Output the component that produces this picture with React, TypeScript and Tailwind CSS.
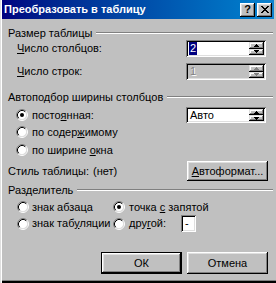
import React from "react";

function Arrow({ up, color }: { up: boolean; color: string }) {
  const rows = up
    ? [
        [2, 0, 1],
        [1, 1, 3],
        [0, 2, 5],
      ]
    : [
        [0, 0, 5],
        [1, 1, 3],
        [2, 2, 1],
      ];
  return (
    <svg width="5" height="3" viewBox="0 0 5 3" shapeRendering="crispEdges">
      {rows.map(([x, y, w], i) => (
        <rect key={i} x={x} y={y} width={w} height={1} fill={color} />
      ))}
    </svg>
  );
}

function SpinBtn({ up, disabled }: { up: boolean; disabled?: boolean }) {
  return (
    <div className="flex-1 flex items-center justify-center bg-[#c0c0c0] shadow-[inset_-1px_-1px_0_#000,inset_1px_1px_0_#dfdfdf,inset_-2px_-2px_0_#808080,inset_2px_2px_0_#fff]">
      <Arrow up={up} color={disabled ? "#808080" : "#000"} />
    </div>
  );
}

function Spin({ children, disabled, tall }: { children: React.ReactNode; disabled?: boolean; tall?: boolean }) {
  return (
    <div
      className={`flex shrink-0 w-[80px] p-[2px] shadow-[inset_1px_1px_0_#808080,inset_-1px_-1px_0_#fff,inset_2px_2px_0_#000,inset_-2px_-2px_0_#dfdfdf] ${
        tall ? "h-[17px]" : "h-[16px]"
      } ${disabled ? "bg-[#c0c0c0]" : "bg-white"}`}
    >
      <div className="flex-1 flex items-center pl-[1px]">{children}</div>
      <div className="w-[15px] flex flex-col">
        <SpinBtn up disabled={disabled} />
        <SpinBtn up={false} disabled={disabled} />
      </div>
    </div>
  );
}

function Radio({ checked }: { checked?: boolean }) {
  return (
    <svg width="12" height="12" viewBox="0 0 12 12" className="shrink-0">
      <circle cx="6" cy="6" r="4.5" fill="#fff" />
      <path d="M2.11 9.89 A5.5 5.5 0 0 1 9.89 2.11" fill="none" stroke="#808080" strokeWidth="1" />
      <path d="M9.89 2.11 A5.5 5.5 0 0 1 2.11 9.89" fill="none" stroke="#fff" strokeWidth="1" />
      <path d="M2.82 9.18 A4.5 4.5 0 0 1 9.18 2.82" fill="none" stroke="#000" strokeWidth="1" />
      <path d="M9.18 2.82 A4.5 4.5 0 0 1 2.82 9.18" fill="none" stroke="#dfdfdf" strokeWidth="1" />
      {checked && <circle cx="6" cy="6" r="2" fill="#000" />}
    </svg>
  );
}

function Heading({ children }: { children: React.ReactNode }) {
  return (
    <div className="flex items-center h-[14px]">
      <span className="whitespace-nowrap">{children}</span>
      <div className="flex-1 ml-[4px] border-t border-t-[#808080] border-b border-b-white" />
    </div>
  );
}

function Btn({ children, def, w }: { children: React.ReactNode; def?: boolean; w: string }) {
  return (
    <div className={`${w} shrink-0 h-full ${def ? "border border-black" : ""}`}>
      <div className="w-full h-full flex items-center justify-center bg-[#c0c0c0] shadow-[inset_-1px_-1px_0_#000,inset_1px_1px_0_#fff,inset_-2px_-2px_0_#808080,inset_2px_2px_0_#dfdfdf]">
        {children}
      </div>
    </div>
  );
}

function TitleBtn({ children }: { children: React.ReactNode }) {
  return (
    <div className="w-[15px] h-[14px] flex items-center justify-center bg-[#c0c0c0] shadow-[inset_-1px_-1px_0_#000,inset_1px_1px_0_#fff,inset_-2px_-2px_0_#808080,inset_2px_2px_0_#dfdfdf]">
      {children}
    </div>
  );
}

export default function App() {
  return (
    <div className="w-[276px] h-[283px] bg-[#c0c0c0] flex flex-col text-[11px] leading-[13px] text-black [font-family:'Liberation_Sans',Arial,sans-serif] shadow-[inset_1px_0_0_#dfdfdf,inset_2px_0_0_#fff,inset_0_-2px_0_#000,inset_0_-3px_0_#808080]">
      {/* title bar */}
      <div className="mx-[2px] h-[19px] flex items-center bg-linear-to-r from-[#000080] to-[#1084d0] px-[2px]">
        <span className="flex-1 text-white font-bold text-[11px] whitespace-nowrap">Преобразовать в таблицу</span>
        <TitleBtn>
          <span className="font-bold text-[11px] leading-none">?</span>
        </TitleBtn>
        <div className="w-[2px]" />
        <TitleBtn>
          <svg width="8" height="7" viewBox="0 0 8 7" shapeRendering="crispEdges">
            <path d="M0 0h2v1h-2zM6 0h2v1h-2zM1 1h2v1h-2zM5 1h2v1h-2zM2 2h4v1h-4zM3 3h2v1h-2zM2 4h4v1h-4zM1 5h2v1h-2zM5 5h2v1h-2zM0 6h2v1h-2zM6 6h2v1h-2z" fill="#000" />
          </svg>
        </TitleBtn>
      </div>

      <div className="flex flex-col pl-[8px] pr-[3px]">
        <div className="mt-[7px]">
          <Heading>Размер таблицы</Heading>
        </div>

        <div className="flex items-center h-[17px]">
          <span className="w-[178px] shrink-0 pl-[9px]">
            <u>Ч</u>исло столбцов:
          </span>
          <Spin tall>
            <span className="bg-[#000080] text-white px-[1px]">2</span>
          </Spin>
        </div>

        <div className="flex items-center h-[17px] mt-[6px]">
          <span className="w-[178px] shrink-0 pl-[9px]">
            <u>Ч</u>исло строк:
          </span>
          <Spin tall disabled>
            <span className="text-[#808080] [text-shadow:1px_1px_0_#fff] px-[1px]">1</span>
          </Spin>
        </div>

        <div className="mt-[10px]">
          <Heading>Автоподбор ширины столбцов</Heading>
        </div>

        <div className="flex items-center h-[16px] mt-[3px]">
          <div className="w-[178px] shrink-0 flex items-center pl-[8px] gap-[4px]">
            <Radio checked />
            <span>
              посто<u>я</u>нная:
            </span>
          </div>
          <Spin>
            <span className="px-[1px]">Авто</span>
          </Spin>
        </div>

        <div className="flex items-center h-[16px] mt-[1px] pl-[8px] gap-[4px]">
          <Radio />
          <span>
            по содер<u>ж</u>имому
          </span>
        </div>

        <div className="flex items-center h-[16px] mt-[2px] pl-[8px] gap-[4px]">
          <Radio />
          <span>
            по ширине <u>о</u>кна
          </span>
        </div>

        <div className="flex items-center h-[20px] mt-[3px]">
          <span className="w-[85px] shrink-0 whitespace-nowrap">Стиль таблицы:</span>
          <span className="w-[94px] shrink-0">(нет)</span>
          <Btn w="w-[81px]">
            <span>
              <u>А</u>втоформат...
            </span>
          </Btn>
        </div>

        <div className="mt-[2px]">
          <Heading>Разделитель</Heading>
        </div>

        <div className="flex items-center h-[16px] mt-[2px]">
          <div className="w-[105px] shrink-0 flex items-center pl-[9px] gap-[3px]">
            <Radio />
            <span>знак абзаца</span>
          </div>
          <div className="flex items-center gap-[4px]">
            <Radio checked />
            <span>
              точка <u>с</u> запятой
            </span>
          </div>
        </div>

        <div className="flex items-center h-[17px]">
          <div className="w-[105px] shrink-0 flex items-center pl-[9px] gap-[3px]">
            <Radio />
            <span className="whitespace-nowrap">
              знак таб<u>у</u>ляции
            </span>
          </div>
          <div className="flex items-center gap-[4px]">
            <Radio />
            <span className="w-[52px] shrink-0">
              дру<u>г</u>ой:
            </span>
          </div>
          <div className="w-[15px] h-[17px] shrink-0 flex items-center pl-[4px] bg-white shadow-[inset_1px_1px_0_#808080,inset_-1px_-1px_0_#fff,inset_2px_2px_0_#000,inset_-2px_-2px_0_#dfdfdf]">
            -
          </div>
        </div>

        <div className="flex justify-end gap-[5px] pr-[5px] h-[22px] mt-[20px]">
          <Btn w="w-[81px]" def>
            <span>ОК</span>
          </Btn>
          <Btn w="w-[81px]">
            <span>Отмена</span>
          </Btn>
        </div>
      </div>
    </div>
  );
}
